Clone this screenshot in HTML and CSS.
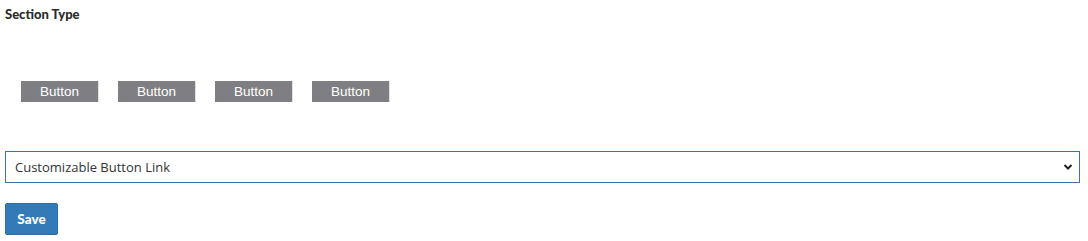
FILE: index.html
```html
<!DOCTYPE html>
<html lang="en">
<head>
    <meta name="viewport" content="width=device-width,initial-scale=1.0">
    <title>Section Type</title>
    <link rel="stylesheet" href="styles.css">
</head>

<body>
    <div class="panel">
        <label class="field-label">Section Type</label>

        <div class="preview">
            <span class="preview-btn">Button</span>
            <span class="preview-btn">Button</span>
            <span class="preview-btn">Button</span>
            <span class="preview-btn">Button</span>
        </div>

        <div class="select-wrap">
            <select class="type-select">
                <option>Customizable Button Link</option>
            </select>
            <svg class="chevron" width="10" height="8" viewBox="0 0 10 8">
                <path d="M1.5 2 L5 5.5 L8.5 2" fill="none" stroke="#222" stroke-width="2"/>
            </svg>
        </div>

        <button class="save-btn">Save</button>
    </div>
</body>

</html>
```

FILE: styles.css
```css
html {
    box-sizing: border-box;
}

*,
*:before,
*:after {
    box-sizing: inherit;
}

body {
    margin: 0;
    background: #fff;
    font-family: "Open Sans", "Liberation Sans", sans-serif;
}

.panel {
    display: flex;
    flex-direction: column;
    align-items: flex-start;
    padding: 6px 8px 0 5px;
}

.field-label {
    font-family: Lato, "Liberation Sans", sans-serif;
    font-weight: 900;
    font-size: 13px;
    line-height: 16px;
    color: #2b2b2b;
}

.preview {
    display: flex;
    gap: 19px;
    margin: 59px 0 0 16px;
}

.preview-btn {
    display: flex;
    justify-content: center;
    align-items: center;
    width: 78px;
    height: 21px;
    background: #7f7f83;
    border-right: 1px solid #e2e2e4;
    color: #fff;
    font-family: "Liberation Sans", Arial, sans-serif;
    font-size: 13.5px;
}

.select-wrap {
    position: relative;
    align-self: stretch;
    margin-top: 49px;
}

.type-select {
    display: block;
    width: 100%;
    height: 32px;
    padding: 0 9px;
    border: 1px solid #3a73ad;
    border-radius: 0;
    background: #fff;
    color: #333;
    font-family: "Open Sans", "Liberation Sans", sans-serif;
    font-size: 13px;
    appearance: none;
    -webkit-appearance: none;
}

.chevron {
    position: absolute;
    right: 7px;
    top: 12px;
    pointer-events: none;
}

.save-btn {
    margin-top: 20px;
    width: 53px;
    height: 32px;
    padding: 0;
    border: 1px solid #2e6da4;
    border-radius: 2px;
    background: #337ab7;
    color: #fff;
    font-family: Lato, "Liberation Sans", sans-serif;
    font-weight: 900;
    font-size: 13.5px;
}
```
